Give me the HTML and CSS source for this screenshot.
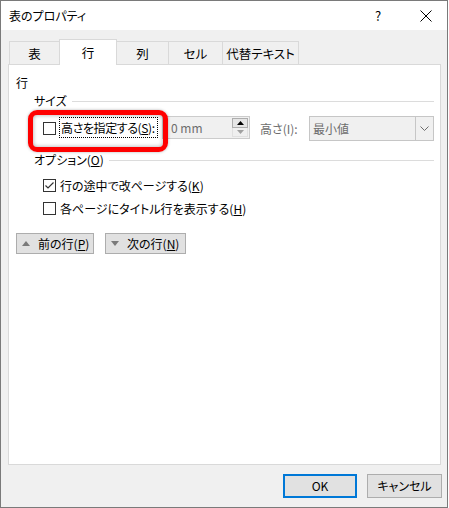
FILE: index.html
```html
<!DOCTYPE html>
<html lang="ja">
<head>
<meta charset="utf-8">
<title>表のプロパティ</title>
<link rel="stylesheet" href="styles.css">
</head>
<body>
<div class="window">
  <div class="titlebar">
    <span class="title">表のプロパティ</span>
    <span class="help">?</span>
    <svg class="close" width="12" height="12" viewBox="0 0 12 12"><path d="M0.5 0.5 L11.5 11.5 M11.5 0.5 L0.5 11.5" stroke="#000" stroke-width="1" fill="none"/></svg>
  </div>
  <div class="client">
    <div class="tabs">
      <div class="tab t1">表</div>
      <div class="tab t2 active">行</div>
      <div class="tab t3">列</div>
      <div class="tab t4">セル</div>
      <div class="tab t5">代替テキスト</div>
    </div>
    <div class="panel">
      <div class="section-label">行</div>
      <div class="group">
        <div class="group-head"><span>サイズ</span><span class="rule"></span></div>
        <div class="size-row">
          <span class="check"></span>
          <span class="focus-label">高さを指定する(<u>S</u>):</span>
          <span class="spin">
            <span class="spin-text">0 mm</span>
            <span class="spin-btns">
              <span class="spin-up"><svg width="7" height="4" viewBox="0 0 7 4"><path d="M0 4 L3.5 0 L7 4 Z" fill="#000"/></svg></span>
              <span class="spin-down"><svg width="7" height="4" viewBox="0 0 7 4"><path d="M0 0 L3.5 4 L7 0 Z" fill="#a0a0a0"/></svg></span>
            </span>
          </span>
          <span class="dim-label">高さ(I):</span>
          <span class="select">
            <span class="select-text">最小値</span>
            <span class="select-btn"><svg width="9" height="5" viewBox="0 0 9 5"><path d="M0.5 0.5 L4.5 4.5 L8.5 0.5" stroke="#6d6d6d" stroke-width="1" fill="none"/></svg></span>
          </span>
        </div>
        <div class="group-head opt"><span>オプション(<u>O</u>)</span><span class="rule"></span></div>
        <div class="opt-row first">
          <span class="check"><svg width="11" height="11" viewBox="0 0 11 11"><path d="M1.5 5.5 L4 8 L9.5 2.5" stroke="#333" stroke-width="1.2" fill="none"/></svg></span>
          <span class="opt-label">行の途中で改ページする(<u>K</u>)</span>
        </div>
        <div class="opt-row">
          <span class="check"></span>
          <span class="opt-label">各ページにタイトル行を表示する(<u>H</u>)</span>
        </div>
      </div>
      <div class="nav">
        <span class="navbtn prev"><svg width="8" height="5" viewBox="0 0 8 5"><path d="M0 5 L4 0 L8 5 Z" fill="#7a7a7a"/></svg><span>前の行(<u>P</u>)</span></span>
        <span class="navbtn next"><svg width="8" height="5" viewBox="0 0 8 5"><path d="M0 0 L4 5 L8 0 Z" fill="#7a7a7a"/></svg><span>次の行(<u>N</u>)</span></span>
      </div>
    </div>
    <div class="footer">
      <span class="btn ok">OK</span>
      <span class="btn cancel">キャンセル</span>
    </div>
  </div>
  <div class="highlight"></div>
</div>
</body>
</html>
```

FILE: styles.css
```css
* { box-sizing: border-box; }
html, body { margin: 0; padding: 0; background: #ffffff; }
body {
  font-family: "Noto Sans CJK JP", "Noto Sans", sans-serif;
  font-size: 12px;
  line-height: 16px;
  color: #000;
  font-feature-settings: "palt";
}
u { text-decoration: underline; text-underline-offset: 1px; }

.window {
  position: relative;
  width: 448px;
  height: 508px;
  border: 1px solid #7a7a7a;
  background: #f0f0f0;
  display: flex;
  flex-direction: column;
}

.titlebar {
  height: 29px;
  background: #ffffff;
  display: flex;
  align-items: center;
  padding-left: 8px;
  flex: none;
}
.title { flex: 1; }
.help { width: 8px; margin-right: 37px; font-size: 13px; }
.close { margin-right: 15px; }

.client {
  flex: 1;
  display: flex;
  flex-direction: column;
}

.tabs {
  display: flex;
  align-items: flex-end;
  padding: 9px 0 0 8px;
  height: 34px;
  position: relative;
  z-index: 2;
}
.tab {
  height: 23px;
  border: 1px solid #d9d9d9;
  border-bottom: none;
  margin-right: -1px;
  display: flex;
  align-items: center;
  justify-content: center;
  background: #f0f0f0;
  padding-top: 1px;
  font-size: 12.5px;
}
.tab.active {
  background: #ffffff;
  margin-bottom: -1px;
  height: 26px;
  position: relative;
  z-index: 3;
}
.t1 { width: 51px; }
.t2 { width: 58px; }
.t3 { width: 53px; }
.t4 { width: 55px; }
.t5 { width: 77px; }

.panel {
  margin: 0 6px 0 7px;
  height: 401px;
  border: 1px solid #d9d9d9;
  background: #ffffff;
  padding: 10px 6px 0 7px;
  position: relative;
  z-index: 1;
}

.section-label { height: 16px; }

.group { margin-left: 18px; margin-top: 2px; }
.group-head {
  display: flex;
  align-items: center;
  height: 16px;
}
.group-head .rule {
  flex: 1;
  height: 1px;
  background: #dcdcdc;
  margin-left: 5px;
}
.group-head.opt { margin-top: 11px; }

.size-row {
  display: flex;
  align-items: center;
  margin-top: 7px;
  height: 25px;
  padding-left: 9px;
}
.check {
  width: 13px;
  height: 13px;
  border: 1px solid #333333;
  background: #fff;
  display: flex;
  align-items: center;
  justify-content: center;
  flex: none;
}
.focus-label {
  margin-left: 3px;
  height: 21px;
  width: 99px;
  border: 1px dotted #000;
  padding-left: 1px;
  display: flex;
  align-items: center;
  white-space: nowrap;
  margin-top: -2px;
  overflow: hidden;
  letter-spacing: -0.4px;
}
.spin {
  margin-left: 4px;
  width: 88px;
  height: 23px;
  border: 1px solid #cccccc;
  background: #f0f0f0;
  display: flex;
  align-items: center;
  margin-top: -2px;
}
.spin-text { flex: 1; padding-left: 8px; color: #6d6d6d; }
.spin-btns {
  width: 17px;
  height: 21px;
  display: flex;
  flex-direction: column;
  padding: 1px 1px 1px 0;
}
.spin-up, .spin-down {
  flex: 1;
  display: flex;
  align-items: center;
  justify-content: center;
}
.spin-up { border: 1px solid #adadad; background: #e5e5e5; }
.spin-down { background: #efefef; border: 1px solid #e0e0e0; border-top: none; }

.dim-label { margin-left: 10px; color: #6d6d6d; width: 48px; white-space: nowrap; }
.select {
  margin-left: 1px;
  width: 125px;
  height: 25px;
  border: 1px solid #c6c6c6;
  background: #f0f0f0;
  display: flex;
  align-items: center;
}
.select-text { flex: 1; padding-left: 3px; color: #6d6d6d; }
.select-btn {
  width: 18px;
  height: 23px;
  border-left: 1px solid #c6c6c6;
  display: flex;
  align-items: center;
  justify-content: center;
}

.opt-row {
  display: flex;
  align-items: center;
  padding-left: 9px;
  height: 23px;
}
.opt-row.first { margin-top: 6px; }
.opt-label { margin-left: 4px; white-space: nowrap; }

.nav {
  display: flex;
  gap: 11px;
  margin-top: 13px;
}
.navbtn {
  height: 21px;
  border: 1px solid #adadad;
  background: #e1e1e1;
  display: flex;
  align-items: center;
  padding-left: 5px;
}
.navbtn svg { margin-right: 8px; }
.navbtn.prev { width: 78px; }
.navbtn.next { width: 81px; }

.footer {
  display: flex;
  justify-content: flex-end;
  gap: 10px;
  padding: 9px 5px 0 0;
}
.btn {
  height: 24px;
  display: flex;
  align-items: center;
  justify-content: center;
  background: #e1e1e1;
  border: 1px solid #adadad;
}
.btn.ok { width: 74px; border: 2px solid #0078d7; }
.btn.cancel { width: 75px; }

.highlight {
  position: absolute;
  left: 27px;
  top: 109px;
  width: 140px;
  height: 42px;
  border: 5px solid #ff0000;
  border-radius: 9px;
  box-shadow: inset 0 0 4px rgba(0,0,0,0.35), 0 0 3px rgba(0,0,0,0.3);
  z-index: 10;
}
```
